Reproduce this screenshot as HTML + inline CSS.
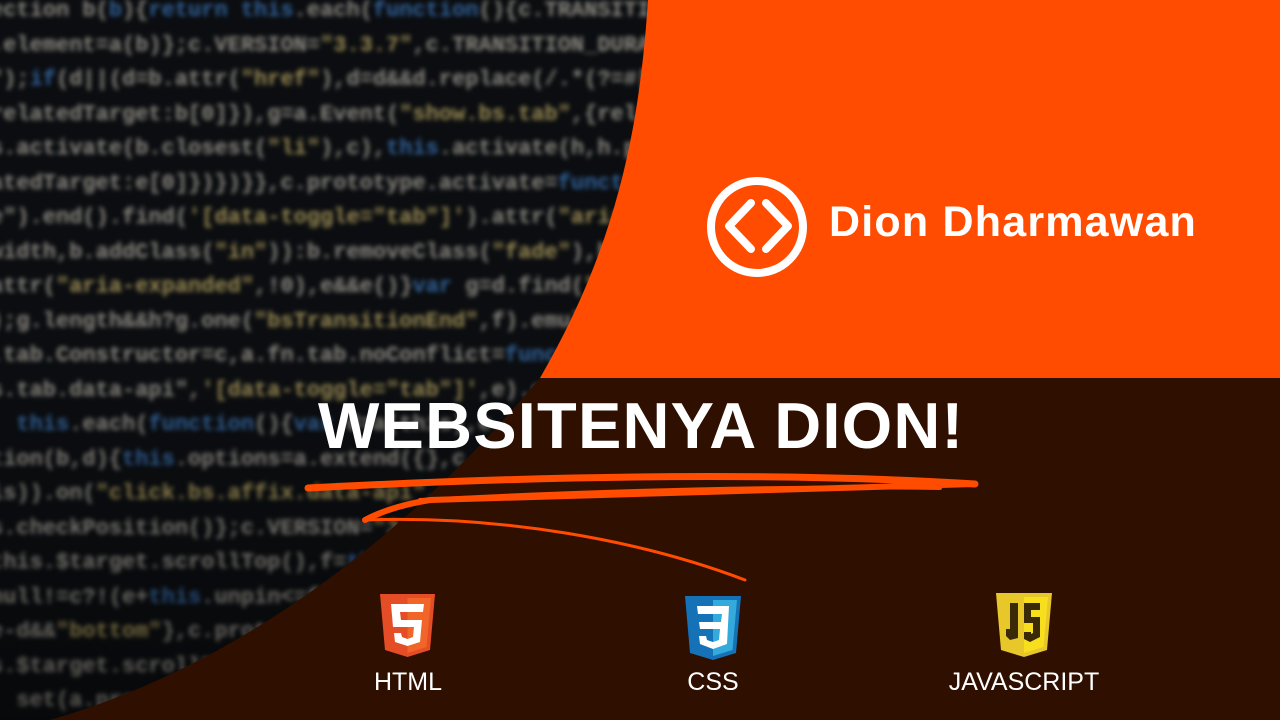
<!DOCTYPE html>
<html><head><meta charset="utf-8"><style>
*{margin:0;padding:0}
body{width:1280px;height:720px;overflow:hidden;background:#0b0d10;position:relative;font-family:"Liberation Sans",sans-serif}
pre{position:absolute;left:-10px;top:-6px;font:bold 22px/34.5px "Liberation Mono",monospace;color:#b8b3a8;filter:blur(2.4px);opacity:.75;white-space:pre}
.k{color:#3f7fc8}.s{color:#cbb66c}
svg.bg{position:absolute;left:0;top:0}
.t{position:absolute;color:#fff;font-weight:bold;white-space:nowrap}
.lab{position:absolute;color:#fff;font-size:25px;top:668px;text-align:center;width:200px}
</style></head><body>
<pre>ection b(<span class="k">b</span>){<span class="k">return</span> <span class="k">this</span>.each(<span class="k">function</span>(){c.TRANSITION_DURATIO
.element=a(b)};c.VERSION=<span class="s">"3.3.7"</span>,c.TRANSITION_DURATIO
");<span class="k">if</span>(d||(d=b.attr(<span class="s">"href"</span>),d=d&amp;&amp;d.replace(/.*(?=#[^\s
relatedTarget:b[0]}),g=a.Event(<span class="s">"show.bs.tab"</span>,{relate
s.activate(b.closest(<span class="s">"li"</span>),c),<span class="k">this</span>.activate(h,h.pare
atedTarget:e[0]})})}},c.prototype.activate=<span class="k">function</span>
e").end().find(<span class="s">'[data-toggle="tab"]'</span>).attr(<span class="s">"aria-e</span>
width,b.addClass(<span class="s">"in"</span>)):b.removeClass(<span class="s">"fade"</span>),b.pa
attr(<span class="s">"aria-expanded"</span>,!0),e&amp;&amp;e()}<span class="k">var</span> g=d.find(<span class="s">"&gt;</span>
);g.length&amp;&amp;h?g.one(<span class="s">"bsTransitionEnd"</span>,f).emulat
.tab.Constructor=c,a.fn.tab.noConflict=<span class="k">functio</span>
s.tab.data-api",<span class="s">'[data-toggle="tab"]'</span>,e).on
  <span class="k">this</span>.each(<span class="k">function</span>(){<span class="k">var</span> d=a(this),e
tion(b,d){<span class="k">this</span>.options=a.extend({},c.DEF
is)).on(<span class="s">"click.bs.affix.data-api"</span>,a.proxy
s.checkPosition()};c.VERSION=<span class="s">"3.3.7"</span>
this.$target.scrollTop(),f=<span class="k">this</span>.$element
null!=c?!(e+<span class="k">this</span>.unpin&lt;=f.top)
e-d&amp;&amp;<span class="s">"bottom"</span>},c.prototype
s.$target.scrollTop()
  set(a.proxy(<span class="k">this</span>
</pre>
<svg class="bg" width="1280" height="720" viewBox="0 0 1280 720">
<defs><linearGradient id="dim" x1="0" y1="0" x2="0" y2="1"><stop offset="0.5" stop-color="#000" stop-opacity="0"/><stop offset="1" stop-color="#000" stop-opacity="0.35"/></linearGradient></defs>
<rect width="700" height="720" fill="url(#dim)"/>
<path d="M648,0 C640,120 620,240 540,378 L1280,378 L1280,0 Z" fill="#ff4c00"/>
<path d="M540,378 C430,510 260,660 50,720 L1280,720 L1280,378 Z" fill="#2f1000"/>
<g fill="none" stroke="#ff4c00" stroke-linecap="round">
<path d="M308,488 C500,478 750,470 975,484" stroke-width="7"/>
<path d="M975,484 C800,490 600,494 430,500 C400,505 380,512 365,520" stroke-width="6"/>
<path d="M420,500 C600,490 800,486 940,488" stroke-width="4"/>
<path d="M365,520 C500,515 640,540 745,580" stroke-width="3"/>
</g>
<circle cx="757" cy="227" r="46" fill="none" stroke="#fff" stroke-width="8"/>
<path d="M751,203 L729,226 L751,249" fill="none" stroke="#fff" stroke-width="8" stroke-linecap="round" stroke-linejoin="round"/>
<path d="M766,203 L788,226 L766,249" fill="none" stroke="#fff" stroke-width="8" stroke-linecap="round" stroke-linejoin="round"/>
<g transform="translate(380,594)">
<path d="M0,0 H55 L50,56 L27.5,63 L5,56 Z" fill="#e44d26"/>
<path d="M27.5,4 H51 L46.5,53 L27.5,59 Z" fill="#f16529"/>
<path d="M11,10 H44 L43,18 H20 L21,26 H42 L40,48 L27.5,52 L15,48 L14,39 H21 L22,43 L27.5,45 L33,43 L34,33 H13 Z" fill="#fff"/>
</g>
<g transform="translate(685,596)">
<path d="M0,0 H56 L51,57 L28,64 L5,57 Z" fill="#1572b6"/>
<path d="M28,4 H52 L47.5,54 L28,60 Z" fill="#33a9dc"/>
<path d="M12,10 H44 L42,48 L28,53 L15,48 L14,40 H21 L22,44 L28,46 L34,44 L35,33 H15 L14,26 H36 L37,18 H13 Z" fill="#fff"/>
</g>
<g transform="translate(996,593)">
<path d="M0,0 H56 L51,57 L28,64 L5,57 Z" fill="#e8c72b"/>
<path d="M28,4 H52 L47.5,54 L28,60 Z" fill="#f7df1e"/>
<path d="M14,10 H22 V45 L14,47 L10,43 V36 H14 Z" fill="#3a2a05"/>
<path d="M28,10 H44 V17 H35 V24 H44 V44 L34,49 L28,46 V39 H35 V41 L37,40 V30 H28 Z" fill="#3a2a05"/>
</g>
</svg>
<div class="t" style="left:829px;top:198px;font-size:43px;letter-spacing:1.2px">Dion Dharmawan</div>
<div class="t" style="left:318px;top:388px;font-size:65px;letter-spacing:1.2px">WEBSITENYA DION!</div>
<div class="lab" style="left:308px">HTML</div>
<div class="lab" style="left:613px">CSS</div>
<div class="lab" style="left:924px">JAVASCRIPT</div>
</body></html>
